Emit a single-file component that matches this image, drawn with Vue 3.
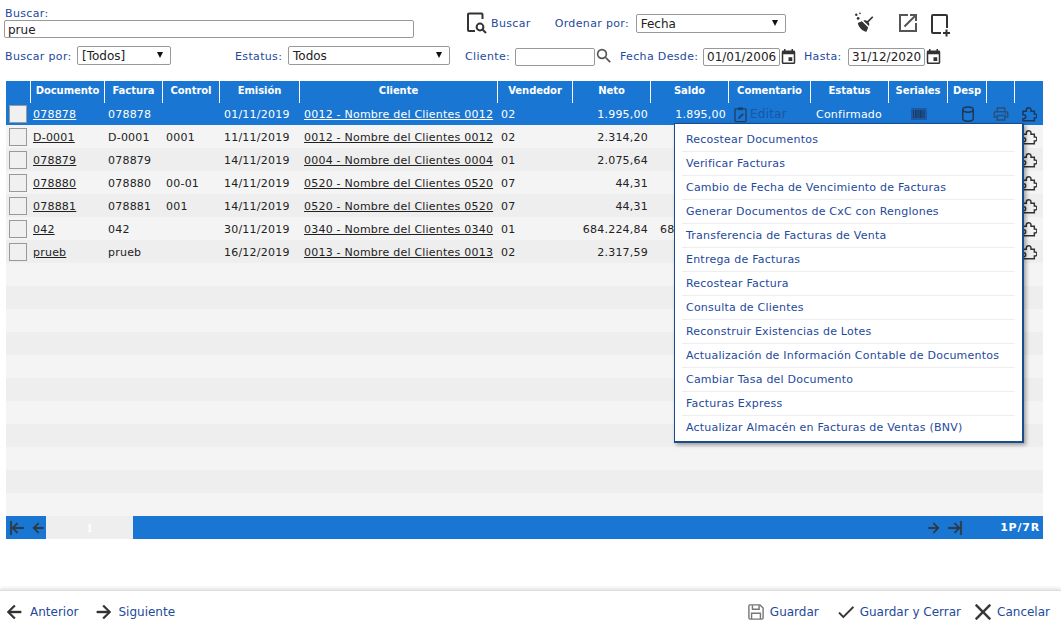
<script setup>
const d = {
  broom: 'M19.36,2.72L20.78,4.14L15.06,9.85C16.13,11.39 16.28,13.24 15.38,14.44L9.06,8.12C10.26,7.22 12.11,7.37 13.65,8.44L19.36,2.72M5.93,17.57C3.92,15.56 2.69,13.16 2.33,10.92L7.2,8.83L14.67,16.3L12.58,21.17C10.34,20.81 7.94,19.58 5.93,17.57Z',
  open: 'M14,3V5H17.59L7.76,14.83L9.17,16.24L19,6.41V10H21V3M21,12H19V19H5V5H12V3H3V21H21Z',
  calendar: 'M19,19H5V8H19M16,1V3H8V1H6V3H5C3.89,3 3,3.89 3,5V19A2,2 0 0,0 5,21H19A2,2 0 0,0 21,19V5C21,3.89 20.1,3 19,3H18V1M17,12H12V17H17V12Z',
  magnify: 'M9.5,3A6.5,6.5 0 0,1 16,9.5C16,11.11 15.41,12.59 14.44,13.73L14.71,14H15.5L20.5,19L19,20.5L14,15.5V14.71L13.73,14.44C12.59,15.41 11.11,16 9.5,16A6.5,6.5 0 0,1 3,9.5A6.5,6.5 0 0,1 9.5,3M9.5,5C7,5 5,7 5,9.5C5,12 7,14 9.5,14C12,14 14,12 14,9.5C14,7 12,5 9.5,5Z',
  printer: 'M19 8C20.66 8 22 9.34 22 11V17H18V21H6V17H2V11C2 9.34 3.34 8 5 8H6V3H18V8H19M8 5V8H16V5H8M16 19V15H8V19H16M18 15H20V11C20 10.45 19.55 10 19 10H5C4.45 10 4 10.45 4 11V15H6V13H18V15M19 11.5C19 12.05 18.55 12.5 18 12.5C17.45 12.5 17 12.05 17 11.5C17 10.95 17.45 10.5 18 10.5C18.55 10.5 19 10.95 19 11.5Z',
  puzzle: 'M3 8h5V6a3.500 3.500 0 0 1 7 0v2h5v4h1a3 3 0 0 1 0 6h-1v4H3v-3h1a3 3 0 0 0 0-6H3z',
  left: 'M20,11V13H8L13.5,18.5L12.08,19.92L4.16,12L12.08,4.08L13.5,5.5L8,11H20Z',
  right: 'M4,11V13H16L10.5,18.5L11.92,19.92L19.84,12L11.92,4.08L10.5,5.5L16,11H4Z',
  first: 'M11.92,19.92L4,12L11.92,4.08L13.33,5.5L7.83,11H22V13H7.83L13.34,18.5L11.92,19.92M4,12V2H2V22H4V12Z',
  last: 'M12.08,4.08L20,12L12.08,19.92L10.67,18.5L16.17,13H2V11H16.17L10.67,5.5L12.08,4.08M20,12V22H22V2H20V12Z',
  check: 'M21,7L9,19L3.5,13.5L4.91,12.09L9,16.17L19.59,5.59L21,7Z',
  close: 'M19,6.41L17.59,5L12,10.59L6.41,5L5,6.41L10.59,12L5,17.59L6.41,19L12,13.41L17.59,19L19,17.59L13.41,12L19,6.41Z',
}

const heads = ['', 'Documento', 'Factura', 'Control', 'Emisión', 'Cliente', 'Vendedor', 'Neto', 'Saldo', 'Comentario', 'Estatus', 'Seriales', 'Desp', '', '']

// the menu hides the saldo of most rows, only row 042 sticks out on its left
const rows = [
  { doc: '078878', fac: '078878', ctl: '', fecha: '01/11/2019', cli: '0012 - Nombre del Clientes 0012', ven: '02', neto: '1.995,00', saldo: '1.895,00' },
  { doc: 'D-0001', fac: 'D-0001', ctl: '0001', fecha: '11/11/2019', cli: '0012 - Nombre del Clientes 0012', ven: '02', neto: '2.314,20', saldo: '' },
  { doc: '078879', fac: '078879', ctl: '', fecha: '14/11/2019', cli: '0004 - Nombre del Clientes 0004', ven: '01', neto: '2.075,64', saldo: '' },
  { doc: '078880', fac: '078880', ctl: '00-01', fecha: '14/11/2019', cli: '0520 - Nombre del Clientes 0520', ven: '07', neto: '44,31', saldo: '' },
  { doc: '078881', fac: '078881', ctl: '001', fecha: '14/11/2019', cli: '0520 - Nombre del Clientes 0520', ven: '07', neto: '44,31', saldo: '' },
  { doc: '042', fac: '042', ctl: '', fecha: '30/11/2019', cli: '0340 - Nombre del Clientes 0340', ven: '01', neto: '684.224,84', saldo: '68' },
  { doc: 'prueb', fac: 'prueb', ctl: '', fecha: '16/12/2019', cli: '0013 - Nombre del Clientes 0013', ven: '02', neto: '2.317,59', saldo: '' },
]
const emptyRows = 11

const menu = [
  'Recostear Documentos',
  'Verificar Facturas',
  'Cambio de Fecha de Vencimiento de Facturas',
  'Generar Documentos de CxC con Renglones',
  'Transferencia de Facturas de Venta',
  'Entrega de Facturas',
  'Recostear Factura',
  'Consulta de Clientes',
  'Reconstruir Existencias de Lotes',
  'Actualización de Información Contable de Documentos',
  'Cambiar Tasa del Documento',
  'Facturas Express',
  'Actualizar Almacén en Facturas de Ventas (BNV)',
]
</script>

<template>
  <div class="page">
    <div class="filters">
      <div class="line one">
        <div class="search-box">
          <label class="lbl">Buscar:</label>
          <input class="inp wide" value="prue" />
        </div>
        <a class="search-btn">
          <svg class="i-search" viewBox="0 0 20 22" fill="none" stroke="#333" stroke-width="2">
            <path d="M15.5 7V2.5a1 1 0 0 0-1-1H2a1 1 0 0 0-1 1V18a1 1 0 0 0 1 1h6" />
            <circle cx="13" cy="15" r="3.4" />
            <path d="M15.5 17.5L19 21" />
          </svg>
          <span class="lbl">Buscar</span>
        </a>
        <span class="lbl order-lbl">Ordenar por:</span>
        <div class="dd order-sel">Fecha</div>
        <svg class="i-broom" viewBox="0 0 24 24">
          <path fill="#333" :d="d.broom" transform="translate(2 2) scale(.92)" />
          <circle cx="2.500" cy="3" r="1.300" fill="#333" />
          <circle cx="6.500" cy="1.500" r="0.900" fill="#333" />
          <circle cx="4.500" cy="7" r="1.500" fill="#333" />
        </svg>
        <svg class="i-open" viewBox="3 3 18 18"><path fill="#555" :d="d.open" /></svg>
        <svg class="i-new" viewBox="0 0 20 24" fill="none" stroke="#333" stroke-width="2">
          <path d="M10 19H2a1 1 0 0 1-1-1V2a1 1 0 0 1 1-1h13a1 1 0 0 1 1 1v12" />
          <path d="M15.500 15.500v7M12 19h7" />
        </svg>
      </div>
      <div class="line two">
        <span class="lbl by-lbl">Buscar por:</span>
        <div class="dd by-sel">[Todos]</div>
        <span class="lbl st-lbl">Estatus:</span>
        <div class="dd st-sel">Todos</div>
        <span class="lbl cl-lbl">Cliente:</span>
        <input class="inp cl-inp" />
        <svg class="i-mag" viewBox="2 2 20 20"><path fill="#555" :d="d.magnify" /></svg>
        <span class="lbl fd-lbl">Fecha Desde:</span>
        <input class="inp date" value="01/01/2006" />
        <svg class="i-cal" viewBox="2 1 20 20"><path fill="#333" :d="d.calendar" /></svg>
        <span class="lbl ha-lbl">Hasta:</span>
        <input class="inp date" value="31/12/2020" />
        <svg class="i-cal" viewBox="2 1 20 20"><path fill="#333" :d="d.calendar" /></svg>
      </div>
    </div>

    <div class="grid">
      <div class="tr head">
        <div v-for="(h, i) in heads" :key="i" class="th">{{ h }}</div>
      </div>

      <div v-for="(r, i) in rows" :key="r.doc" class="tr" :class="{ picked: i === 0, alt: i % 2 === 0 }">
        <div class="td"><span class="chk" /></div>
        <div class="td"><a class="link">{{ r.doc }}</a></div>
        <div class="td">{{ r.fac }}</div>
        <div class="td">{{ r.ctl }}</div>
        <div class="td">{{ r.fecha }}</div>
        <div class="td"><a class="link">{{ r.cli }}</a></div>
        <div class="td">{{ r.ven }}</div>
        <div class="td num">{{ r.neto }}</div>
        <div class="td" :class="{ num: i === 0 }">{{ r.saldo }}</div>
        <div class="td edit">
          <template v-if="i === 0">
            <svg viewBox="0 0 16 20" fill="none" stroke="currentColor" stroke-width="1.6">
              <path d="M5 3H2.200a1 1 0 0 0-1 1v13.800a1 1 0 0 0 1 1h11.600a1 1 0 0 0 1-1V4a1 1 0 0 0-1-1H11" />
              <rect x="5" y="1.200" width="6" height="3.400" fill="currentColor" stroke="none" />
              <path d="M5 15.500l.5-2 5-5 1.500 1.500-5 5z" fill="currentColor" stroke="none" />
            </svg>
            <span>Editar</span>
          </template>
        </div>
        <div class="td"><template v-if="i === 0">Confirmado</template></div>
        <div class="td barcode">
          <svg v-if="i === 0" viewBox="0 0 16 12">
            <rect width="16" height="12" rx="1.500" fill="#1b5aa6" />
            <path d="M2.500 2v8M4.500 2v8M6 2v8M8 2v8M9.500 2v8M11 2v8M13 2v8" stroke="#1d3a5f" stroke-width="1" />
          </svg>
        </div>
        <div class="td ico">
          <svg v-if="i === 0" viewBox="0 0 24 24" fill="none" stroke="currentColor" stroke-width="2">
            <path d="M5 6c0-2 3-3.500 7-3.500s7 1.500 7 3.500v12c0 2-3 3.500-7 3.500s-7-1.500-7-3.500z" />
            <path d="M5 6c0 2 3 3.500 7 3.500s7-1.500 7-3.500" />
          </svg>
        </div>
        <div class="td ico print"><svg v-if="i === 0" viewBox="0 0 24 24"><path fill="currentColor" :d="d.printer" /></svg></div>
        <div class="td ico puzzle"><svg viewBox="0 0 24 24"><path fill="none" stroke="currentColor" stroke-width="2.200" :d="d.puzzle" /></svg></div>
      </div>

      <div v-for="n in emptyRows" :key="'e' + n" class="tr" :class="{ alt: n % 2 === 0 }" />

      <div class="pager">
        <svg class="i-pg" viewBox="0 0 24 24"><path :d="d.first" /></svg>
        <svg class="i-pg" viewBox="0 0 24 24"><path :d="d.left" /></svg>
        <div class="pg-num">1</div>
        <div class="pg-fill" />
        <svg class="i-pg" viewBox="0 0 24 24"><path :d="d.right" /></svg>
        <svg class="i-pg" viewBox="0 0 24 24"><path :d="d.last" /></svg>
        <div class="pg-count">1P/7R</div>
      </div>

      <ul class="menu">
        <li v-for="m in menu" :key="m">{{ m }}</li>
      </ul>
    </div>

    <div class="footer">
      <a class="act"><svg viewBox="3 3 18 18"><path :d="d.left" /></svg><span>Anterior</span></a>
      <a class="act next"><svg viewBox="3 3 18 18"><path :d="d.right" /></svg><span>Siguiente</span></a>
      <div class="spring" />
      <a class="act">
        <svg class="plain" viewBox="0 0 18 18">
          <path d="M2 1h11.500L17 4.500V15.500a1.500 1.500 0 0 1-1.500 1.500h-13A1.500 1.500 0 0 1 1 15.500v-13A1.500 1.500 0 0 1 2 1z" />
          <path d="M5 1.500v4.500h7.500V1.500M4 17v-6.500h10V17" />
        </svg>
        <span>Guardar</span>
      </a>
      <a class="act save-close"><svg viewBox="3 4 18 16"><path :d="d.check" /></svg><span>Guardar y Cerrar</span></a>
      <a class="act cancel"><svg viewBox="5 5 14 14"><path :d="d.close" /></svg><span>Cancelar</span></a>
    </div>
  </div>
</template>

<style>
html, body { background: #fff; }
</style>

<style scoped>
.page {
  width: 1061px;
  height: 627px;
  overflow: hidden;
  display: flex;
  flex-direction: column;
  font-family: "DejaVu Sans", Verdana, sans-serif;
  font-size: 11px;
  letter-spacing: .22px;
  color: #222;
}
.lbl { color: #24499c; letter-spacing: .35px; }

.filters { padding: 8px 0 0 4px; height: 81px; flex: none; box-sizing: border-box; }
.line { display: flex; align-items: center; }
.line.one { height: 30px; }
.line.two { height: 19px; margin-top: 8px; padding-left: 1px; }
.line.two .lbl { padding-top: 1px; }
.line.two .inp { margin-top: 2px; }
.search-box { width: 410px; display: flex; flex-direction: column; }
.search-box .lbl { height: 12px; line-height: 12px; padding-left: 1px; }
.inp {
  box-sizing: border-box;
  height: 18px;
  padding: 0 3px;
  border: 1px solid #999;
  border-radius: 2px;
  font: 12px "DejaVu Sans", Verdana, sans-serif;
  color: #222;
  background: #fff;
  outline: none;
}
.wide { width: 410px; padding-top: 1px; }
.search-btn { display: flex; align-items: center; margin-left: 53px; }
.i-search { width: 20px; height: 22px; margin-right: 4px; }
.order-lbl { margin-left: 24px; width: 81px; }
.dd {
  position: relative;
  box-sizing: border-box;
  height: 19px;
  line-height: 18px;
  padding-left: 4px;
  border: 1px solid #999;
  border-radius: 2px;
  font-size: 12px;
  letter-spacing: 0;
  background: #fff;
}
.dd::after {
  content: "";
  position: absolute;
  right: 7px;
  top: 5px;
  border-left: 3.500px solid transparent;
  border-right: 3.500px solid transparent;
  border-top: 6px solid #111;
}
.order-sel { width: 150px; }
.i-broom { width: 22px; height: 22px; margin-left: 68px; }
.i-open { width: 18px; height: 18px; margin-left: 23px; }
.i-new { width: 20px; height: 24px; margin-left: 14px; margin-top: 5px; }

.by-lbl { width: 72px; }
.by-sel { width: 94px; }
.st-lbl { margin-left: 64px; width: 53px; }
.st-sel { width: 162px; }
.cl-lbl { margin-left: 15px; width: 50px; }
.cl-inp { width: 80px; }
.i-mag { width: 16px; height: 16px; margin-left: 1px; }
.fd-lbl { margin-left: 8px; width: 83px; }
.date { width: 77px; padding: 0 0 0 3px; }
.i-cal { width: 15px; height: 15px; margin-left: 1px; margin-top: 1px; }
.ha-lbl { margin-left: 8px; width: 44px; }

.grid { position: relative; margin-left: 6px; width: 1037px; }
.tr {
  display: grid;
  grid-template-columns: 25px 74px 58px 57px 80px 198px 75px 78px 78px 82px 78px 59px 39px 28px 28px;
  height: 23px;
  background: #f4f4f4;
}
.tr.alt { background: #eee; }
.tr.picked, .tr.alt.picked { background: #1976d2; color: #fff; }
.tr.head {
  height: 21px;
  background: #1976d2;
  color: #fff;
  font-weight: 700;
  font-size: 10px;
  letter-spacing: -.05px;
}
.th {
  box-sizing: border-box;
  border-right: 1px solid #fff;
  height: 22px;
  line-height: 20px;
  text-align: center;
  white-space: nowrap;
  overflow: hidden;
}
.th:last-child { border-right: 0; }
.td {
  display: flex;
  align-items: center;
  padding: 1px 3px 0;
  white-space: nowrap;
  min-width: 0;
}
.td:nth-child(2) { padding-left: 2px; }
.td:nth-child(3), .td:nth-child(4), .td:nth-child(7) { padding-left: 3px; }
.td:nth-child(5), .td:nth-child(6) { padding-left: 4px; }
.td:nth-child(9):not(.num) { padding-left: 9px; }
.td:nth-child(11) { padding-left: 5px; }
.num { justify-content: flex-end; }
.link { color: inherit; text-decoration: underline; }
.chk {
  display: block;
  box-sizing: border-box;
  width: 18px;
  height: 18px;
  margin-top: -1px;
  border: 1px solid #999;
  background: #f0f0f0;
}
.edit { color: #1a56a4; font-size: 12px; gap: 3px; padding-left: 5px; }
.edit svg { width: 13px; height: 17px; color: #1f3f66; }
.barcode { justify-content: center; padding: 0; }
.barcode svg { width: 16px; height: 12px; }
.ico { justify-content: center; color: #333; padding: 0; }
.picked .ico { color: #1f3655; }
.picked .ico.print { color: #27507f; }
.ico svg { width: 18px; height: 18px; }
.ico.puzzle svg { width: 16px; height: 16px; }

.pager { display: flex; align-items: center; height: 23px; background: #1976d2; }
.i-pg { width: 16px; height: 16px; fill: #333; stroke: #333; stroke-width: .6; }
.i-pg:nth-child(1) { margin-left: 3px; }
.i-pg:nth-child(2) { margin-left: 5px; }
.pg-num {
  width: 87px;
  height: 23px;
  background: #eee;
  color: #fff;
  text-align: center;
  font: 700 13px/24px "Liberation Serif", serif;
}
.pg-fill { flex: 1; }
.i-pg:nth-child(5) { margin-right: 5px; }
.pg-count { width: 80px; padding-right: 3px; box-sizing: border-box; text-align: right; color: #fff; font-weight: 700; font-size: 11px; letter-spacing: .8px; }

.menu {
  position: absolute;
  left: 668px;
  top: 42px;
  width: 350px;
  height: 320px;
  box-sizing: border-box;
  margin: 0;
  padding: 4px 7px 0;
  list-style: none;
  background: #fff;
  border: 1px solid #1a4b8c;
  border-bottom-width: 2px;
  border-right-width: 2px;
  box-shadow: 2px 2px 4px rgba(0, 0, 0, .35);
}
.menu li {
  height: 24px;
  line-height: 23px;
  box-sizing: border-box;
  padding-left: 4px;
  color: #24499c;
  border-bottom: 1px solid #eee;
  white-space: nowrap;
}
.menu li:last-child { border-bottom: 0; }

.footer {
  margin-top: auto;
  height: 37px;
  box-sizing: border-box;
  display: flex;
  align-items: center;
  padding: 5px 11px 0 6px;
  border-top: 1px solid #ddd;
  box-shadow: 0 -2px 3px rgba(0, 0, 0, .1);
  font-size: 12px;
  letter-spacing: 0;
}
.act { display: flex; align-items: center; color: #24499c; }
.act svg { width: 16px; height: 16px; margin-right: 8px; fill: #333; stroke: #333; stroke-width: .6; }
.act svg.plain { fill: none; stroke: #777; stroke-width: 1.600; margin-right: 6px; }
.next { margin-left: 18px; }
.next svg { margin-right: 6px; }
.spring { flex: 1; }
.save-close { margin-left: 19px; }
.save-close svg { margin-right: 6px; stroke-width: .2; }
.cancel { margin-left: 14px; }
.cancel svg { margin-right: 6px; stroke-width: .2; }
</style>
